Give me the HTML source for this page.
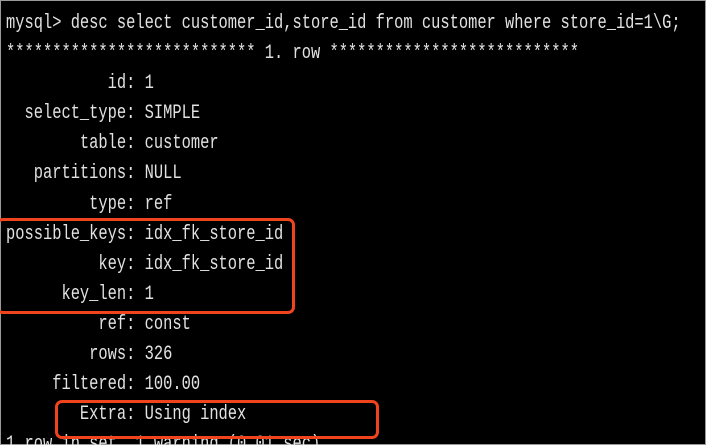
<!DOCTYPE html>
<html><head><meta charset="utf-8"><style>
html,body{margin:0;padding:0;background:#000;width:706px;height:445px;overflow:hidden;}
body{position:relative;}
.frame{position:absolute;left:0;top:0;width:704px;height:443px;border:1px solid #9a9a9a;}
pre{position:absolute;left:6px;top:9px;margin:0;font-family:"Liberation Mono","DejaVu Sans Mono",monospace;font-size:20px;line-height:30.1px;color:#e2e2e2;transform:scaleX(0.77);transform-origin:0 0;white-space:pre;}
.box{position:absolute;border:3px solid #f0441f;border-radius:7px;}
</style></head><body>
<div class="frame"></div>
<pre>mysql&gt; desc select customer_id,store_id from customer where store_id=1\G;
*************************** 1. row ***************************
           id: 1
  select_type: SIMPLE
        table: customer
   partitions: NULL
         type: ref
possible_keys: idx_fk_store_id
          key: idx_fk_store_id
      key_len: 1
          ref: const
         rows: 326
     filtered: 100.00
        Extra: Using index
1 row in set, 1 warning (0.01 sec)</pre>
<div class="box" style="left:-4px;top:218px;width:293px;height:90px;"></div>
<div class="box" style="left:55px;top:400px;width:318px;height:33px;"></div>
</body></html>
